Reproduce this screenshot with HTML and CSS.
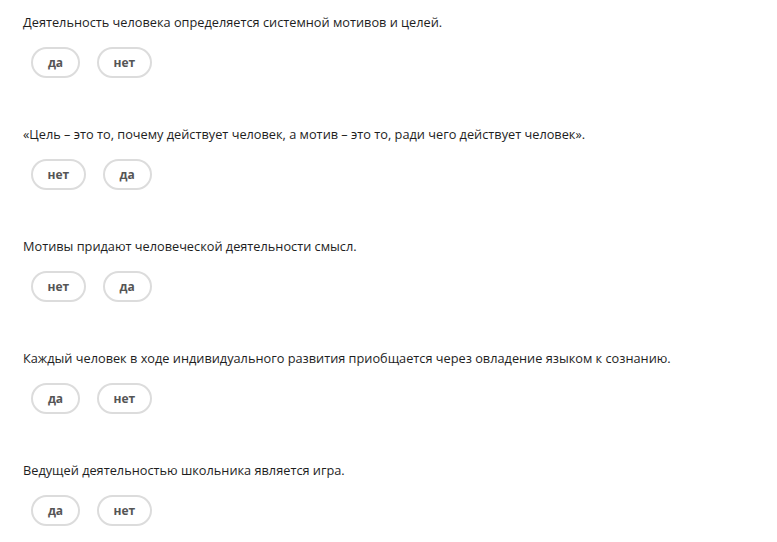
FILE: index.html
```html
<!DOCTYPE html>
<html lang="ru">
<head>
<meta charset="utf-8">
<link rel="stylesheet" href="styles.css">
</head>
<body>
<div class="quiz">
  <div class="item">
    <p class="question">Деятельность человека определяется системной мотивов и целей.</p>
    <div class="answers"><button class="answer">да</button><button class="answer">нет</button></div>
  </div>
  <div class="item">
    <p class="question">«Цель – это то, почему действует человек, а мотив – это то, ради чего действует человек».</p>
    <div class="answers"><button class="answer">нет</button><button class="answer">да</button></div>
  </div>
  <div class="item">
    <p class="question">Мотивы придают человеческой деятельности смысл.</p>
    <div class="answers"><button class="answer">нет</button><button class="answer">да</button></div>
  </div>
  <div class="item">
    <p class="question">Каждый человек в ходе индивидуального развития приобщается через овладение языком к сознанию.</p>
    <div class="answers"><button class="answer">да</button><button class="answer">нет</button></div>
  </div>
  <div class="item">
    <p class="question">Ведущей деятельностью школьника является игра.</p>
    <div class="answers"><button class="answer">да</button><button class="answer">нет</button></div>
  </div>
</div>
</body>
</html>
```
FILE: styles.css
```css
html, body {
  margin: 0;
  padding: 0;
  background: #fff;
}
body {
  font-family: "Open Sans", "Noto Sans", sans-serif;
  color: #222;
}
.quiz {
  padding: 13px 23px 0;
  display: flex;
  flex-direction: column;
  gap: 47px;
}
.question {
  margin: 0 0 16px;
  font-size: 12.75px;
  line-height: 18px;
  color: #1e1e1e;
}
.answers {
  display: flex;
  gap: 17px;
  padding-left: 8px;
}
.answer {
  height: 31px;
  padding: 0 14.5px;
  border: 2px solid #dcdcdc;
  border-radius: 16px;
  background: #fff;
  font-family: "Open Sans", "Noto Sans", sans-serif;
  font-weight: 700;
  font-size: 12px;
  color: #555;
  min-width: 49px;
}
```
